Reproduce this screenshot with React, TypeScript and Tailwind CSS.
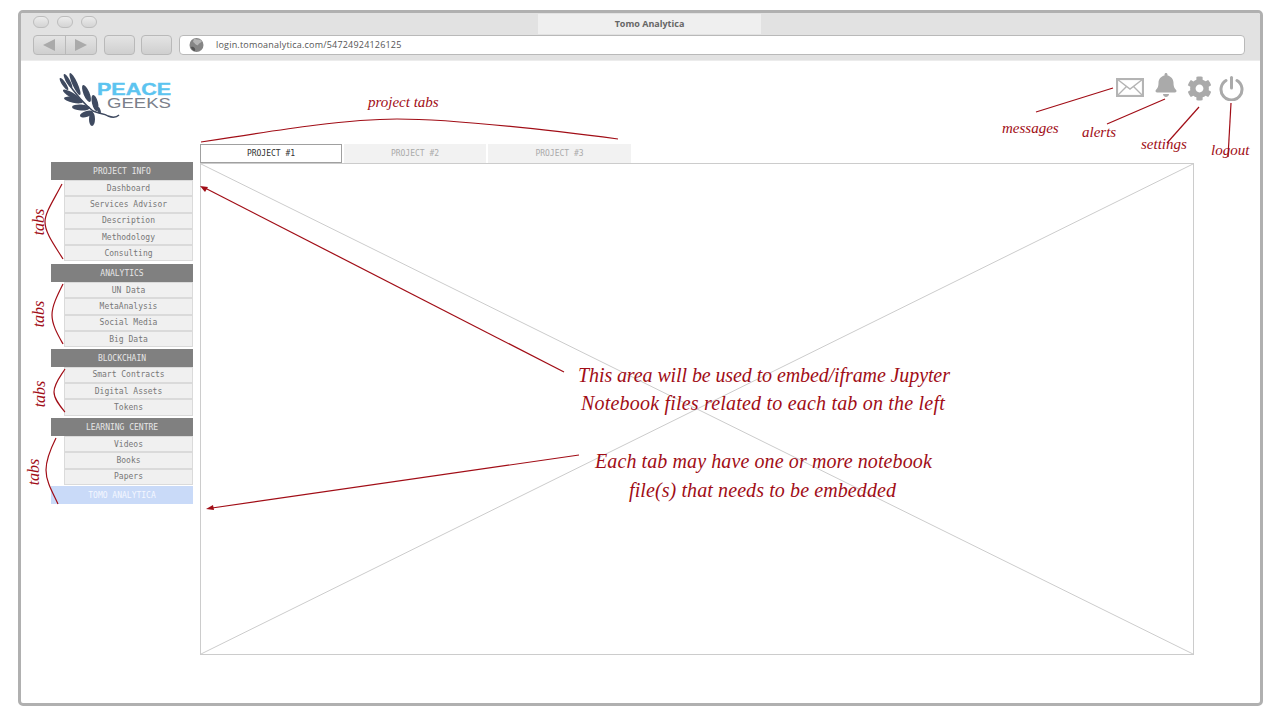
import React from "react";
import { FaBell, FaCog } from "react-icons/fa";

const mono = "font-['DejaVu_Sans_Mono',monospace]";

const groups = [
  { title: "PROJECT INFO", gap: "mt-[18px]", items: ["Dashboard", "Services Advisor", "Description", "Methodology", "Consulting"] },
  { title: "ANALYTICS", gap: "mt-[2.5px]", items: ["UN Data", "MetaAnalysis", "Social Media", "Big Data"] },
  { title: "BLOCKCHAIN", gap: "mt-[1.5px]", items: ["Smart Contracts", "Digital Assets", "Tokens"] },
  { title: "LEARNING CENTRE", gap: "mt-[2.5px]", items: ["Videos", "Books", "Papers"] },
];

const leaves: [number, number, number, number, number][] = [
  [60, 78, 68, 90, 2],
  [64, 74, 72, 88, 2],
  [70, 73, 80, 95, 2.6],
  [63, 90, 80, 100, 2.6],
  [83, 85, 90, 102, 3],
  [64, 98, 83, 102, 2.8],
  [72, 107, 90, 108, 3],
  [93, 95, 97, 111, 3],
  [80, 116, 93, 112, 3],
  [92, 112, 92, 126, 3],
  [98, 107, 100, 114, 1.6],
];

function Logo() {
  return (
    <svg width="113" height="57" viewBox="59 70 113 57" className="mt-[9px] block">
      <path d="M66 80 C 74 92, 84 104, 93 111 C 99 114, 104 113, 108 116 C 113 118, 117 117, 119 115" fill="none" stroke="#3f4a60" strokeWidth="1.5" />
      {leaves.map(([x1, y1, x2, y2, r], i) => {
        const cx = (x1 + x2) / 2;
        const cy = (y1 + y2) / 2;
        const len = Math.hypot(x2 - x1, y2 - y1) / 2;
        const ang = (Math.atan2(y2 - y1, x2 - x1) * 180) / Math.PI;
        return <ellipse key={i} cx={cx} cy={cy} rx={len} ry={r} fill="#3f4a60" transform={`rotate(${ang} ${cx} ${cy})`} />;
      })}
      <text x="97" y="95" textLength="74" lengthAdjust="spacingAndGlyphs" fontFamily="Liberation Sans" fontWeight="700" fontSize="16.5" fill="#5cc4f0" stroke="#5cc4f0" strokeWidth="0.4">PEACE</text>
      <text x="107" y="108" textLength="64" lengthAdjust="spacingAndGlyphs" fontFamily="Liberation Sans" fontWeight="400" fontSize="15.5" fill="#7b808a">GEEKS</text>
    </svg>
  );
}

function NavButton({ dir }: { dir: "l" | "r" }) {
  return (
    <div className="flex-1 flex items-center justify-center">
      <svg width="14" height="12" viewBox="0 0 14 12">
        <path d={dir === "l" ? "M1 6 L13 0 V12 Z" : "M13 6 L1 0 V12 Z"} fill="#aaaaaa" />
      </svg>
    </div>
  );
}

function Overlay() {
  const red = "#a10d16";
  return (
    <svg width="1280" height="720" viewBox="0 0 1280 720" className="absolute left-0 top-0 pointer-events-none">
      <g fill="none" stroke={red} strokeWidth="1.2">
        <path d="M201 142 C 290 128, 350 119, 397 119 C 450 119, 540 129, 618 139" />
        <path d="M1036 112 L1113 88" />
        <path d="M1107 124 L1165 99" />
        <path d="M1167 143 L1199 107" />
        <path d="M1228 157 L1231 103" />
        <path d="M62 184 C 52 203, 45 213, 45 222 C 45 233, 55 246, 63 259" />
        <path d="M63 284 C 57 296, 52 306, 52 315 C 52 325, 58 335, 63 344" />
        <path d="M65 369 C 60 377, 54 384, 54 392 C 54 399, 60 406, 65 412" />
        <path d="M56 438 C 50 450, 46 460, 46 470 C 46 482, 53 493, 58 504" />
        <path d="M564 372 L205 188" />
        <path d="M579 455 L212 508" />
      </g>
      <path d="M200 186 L208 187 L205 192 Z" fill={red} />
      <path d="M206 509 L213 505 L214 510 Z" fill={red} />
    </svg>
  );
}

const note = "absolute whitespace-nowrap font-['Liberation_Serif',serif] italic text-[#a10d16] leading-none";

export default function App() {
  return (
    <div className="relative w-[1280px] h-[720px] bg-white overflow-hidden pt-[10px] pl-[18px]">
      <div className="w-[1245px] h-[696px] border-[3px] border-[#b0b0b0] rounded-[5px] bg-white overflow-hidden">
        <div className="h-[48px] pt-[1px] bg-[#e2e2e2] border-b border-[#ececec]">
          <div className="flex h-[21px] pl-[12px]">
            <div className="flex gap-[8px] mt-[2px] mr-[441px]">
              {[0, 1, 2].map((i) => (
                <div key={i} className="w-[16px] h-[12px] rounded-full border border-[#bdbdbd] bg-gradient-to-b from-[#ececec] to-[#d4d4d4]" />
              ))}
            </div>
            <div className="w-[223px] h-[20px] bg-[#efefef] flex items-center justify-center font-['Open_Sans',sans-serif] font-bold text-[9px] text-[#666666]">
              Tomo Analytica
            </div>
          </div>
          <div className="flex items-center pl-[12px] pr-[15px] h-[20px]">
            <div className="flex w-[64px] h-[20px] rounded-[4px] border border-[#b9b9b9] bg-gradient-to-b from-[#e4e4e4] to-[#cfcfcf] divide-x divide-[#b9b9b9]">
              <NavButton dir="l" />
              <NavButton dir="r" />
            </div>
            <div className="w-[31px] h-[20px] ml-[7px] rounded-[4px] border border-[#b9b9b9] bg-gradient-to-b from-[#e4e4e4] to-[#cfcfcf]" />
            <div className="w-[31px] h-[20px] ml-[6px] rounded-[4px] border border-[#b9b9b9] bg-gradient-to-b from-[#e4e4e4] to-[#cfcfcf]" />
            <div className="flex-1 h-[20px] ml-[7px] rounded-[4px] border border-[#b9b9b9] bg-white flex items-center pl-[8px]">
              <svg width="17" height="14" viewBox="0 0 17 14">
                <circle cx="8.5" cy="7" r="7" fill="#858585" />
                <path d="M6 0.5 C 9 2, 12 1, 14 3 C 13 5, 11 5, 10 7 C 8 8, 7 5, 5 4 Z" fill="#b5b5b5" />
                <path d="M3 9 C 5 8, 8 10, 7 13 C 5 13, 3 11, 3 9 Z" fill="#555555" />
              </svg>
              <span className="ml-[11px] font-['Open_Sans',sans-serif] text-[9px] tracking-[0.2px] text-[#555555]">login.tomoanalytica.com/54724924126125</span>
            </div>
          </div>
        </div>

        <div className="flex justify-between h-[83px] pl-[38px] pr-[16px]">
          <Logo />
          <div className="flex items-start text-[#aaaaaa]">
            <svg width="28" height="19" viewBox="0 0 28 19" className="mt-[17px] mr-[10px]">
              <rect x="1" y="1" width="26" height="17" fill="none" stroke="#b4b4b4" strokeWidth="2.2" />
              <path d="M1 1 L14 11 L27 1 M1 18 L10.5 8.5 M27 18 L17.5 8.5" fill="none" stroke="#b4b4b4" strokeWidth="1.4" />
            </svg>
            <FaBell size={24} className="mt-[12px] mr-[9px]" />
            <FaCog size={25} className="mt-[15px] mr-[7px]" />
            <svg width="25" height="25" viewBox="0 0 25 25" className="mt-[15px]">
              <path d="M7 4.5 A 10.5 10.5 0 1 0 18 4.5" fill="none" stroke="#aaaaaa" strokeWidth="3" strokeLinecap="round" />
              <path d="M12.5 1.5 V12" fill="none" stroke="#aaaaaa" strokeWidth="3" strokeLinecap="round" />
            </svg>
          </div>
        </div>

        <div className={`flex pl-[30px] ${mono}`}>
          <div className="w-[142px]">
            {groups.map((g) => (
              <div key={g.title} className={g.gap}>
                <div className="h-[18px] pt-[2px] bg-[#808080] text-[#e6e6e6] text-[8px] flex items-center justify-center">{g.title}</div>
                {g.items.map((it) => (
                  <div key={it} className="ml-[13px] h-[16.3px] pt-[1px] bg-[#f0f0f0] border border-[#dadada] text-[#777777] text-[8px] flex items-center justify-center">
                    {it}
                  </div>
                ))}
              </div>
            ))}
            <div className="mt-[1.5px] h-[18px] pt-[2px] bg-[#c9daf8] text-[#f4f7ff] text-[8px] flex items-center justify-center">TOMO ANALYTICA</div>
          </div>

          <div className="ml-[7px] w-[994px]">
            <div className="flex gap-[2px] h-[19px] text-[8px]">
              <div className="w-[142px] border border-[#a0a0a0] bg-white text-[#333333] flex items-center justify-center">PROJECT #1</div>
              <div className="w-[142px] bg-[#f2f2f2] text-[#aaaaaa] flex items-center justify-center">PROJECT #2</div>
              <div className="w-[143px] bg-[#f2f2f2] text-[#aaaaaa] flex items-center justify-center">PROJECT #3</div>
            </div>
            <div className="h-[492px] border border-[#cccccc]">
              <svg width="100%" height="100%" viewBox="0 0 992 490" preserveAspectRatio="none" className="block">
                <path d="M0 0 L992 490 M992 0 L0 490" stroke="#cccccc" strokeWidth="1" fill="none" />
              </svg>
            </div>
          </div>
        </div>
      </div>

      <Overlay />

      <div className={`${note} text-[15px] left-[368px] top-[95px]`}>project tabs</div>
      <div className={`${note} text-[15px] left-[1002px] top-[121px]`}>messages</div>
      <div className={`${note} text-[15px] left-[1082px] top-[125px]`}>alerts</div>
      <div className={`${note} text-[15px] left-[1141px] top-[137px]`}>settings</div>
      <div className={`${note} text-[15px] left-[1211px] top-[143px]`}>logout</div>
      <div className={`${note} text-[16px] left-[26px] top-[214px] -rotate-90`}>tabs</div>
      <div className={`${note} text-[16px] left-[26px] top-[306px] -rotate-90`}>tabs</div>
      <div className={`${note} text-[16px] left-[27px] top-[386px] -rotate-90`}>tabs</div>
      <div className={`${note} text-[16px] left-[21px] top-[464px] -rotate-90`}>tabs</div>
      <div className={`${note} text-[20px] tracking-[-0.1px] left-[578px] top-[365px]`}>This area will be used to embed/iframe Jupyter</div>
      <div className={`${note} text-[20px] tracking-[0.2px] left-[581px] top-[393px]`}>Notebook files related to each tab on the left</div>
      <div className={`${note} text-[20px] tracking-[0.1px] left-[595px] top-[451px]`}>Each tab may have one or more notebook</div>
      <div className={`${note} text-[20px] tracking-[0.1px] left-[629px] top-[480px]`}>file(s) that needs to be embedded</div>
    </div>
  );
}
